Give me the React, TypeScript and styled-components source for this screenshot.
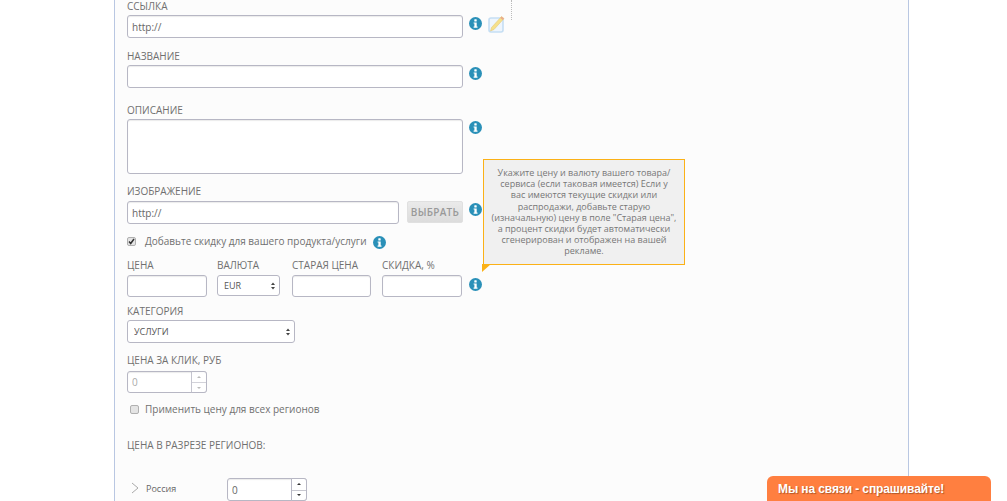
import React from 'react';
import styled, { createGlobalStyle } from 'styled-components';

const GlobalStyle = createGlobalStyle`
  html, body {
    margin: 0;
    padding: 0;
    height: 501px;
    overflow: hidden;
    background: #fff;
    font-family: 'Open Sans', 'Liberation Sans', sans-serif;
  }
`;

const Panel = styled.main`
  position: relative;
  box-sizing: border-box;
  width: 795px;
  height: 501px;
  margin-left: 114px;
  padding-left: 12px;
  background: #fcfcfc;
  border-left: 1px solid #b9c7e2;
  border-right: 1px solid #b9c7e2;
  overflow: hidden;
`;

const Dotted = styled.div`
  position: absolute;
  left: 396px;
  top: 0;
  height: 20px;
  border-left: 1px dotted #bbb;
`;

const Label = styled.label<{ $top?: number; $gap?: number }>`
  display: block;
  height: 12px;
  margin-top: ${(p) => p.$top ?? 0}px;
  margin-bottom: ${(p) => p.$gap ?? 4}px;
  font-size: 10px;
  line-height: 12px;
  color: #707070;
  white-space: nowrap;
`;

const Row = styled.div`
  display: flex;
  align-items: flex-start;
`;

const Field = styled.input<{ $w: number; $h?: number; $muted?: boolean }>`
  box-sizing: border-box;
  display: block;
  width: ${(p) => p.$w}px;
  height: ${(p) => p.$h ?? 23}px;
  padding: 0 4px;
  background: #fff;
  border: 1px solid #b7b7c4;
  border-radius: 3px;
  box-shadow: inset 0 1px 1px rgba(0, 0, 0, 0.08);
  font-family: inherit;
  font-size: 10px;
  color: ${(p) => (p.$muted ? '#aaa' : '#666')};
  outline: none;
`;

const Area = styled.textarea`
  box-sizing: border-box;
  display: block;
  width: 336px;
  height: 55px;
  background: #fff;
  border: 1px solid #b7b7c4;
  border-radius: 3px;
  box-shadow: inset 0 1px 1px rgba(0, 0, 0, 0.08);
  resize: none;
  outline: none;
`;

const Info = styled.svg<{ $left?: number; $top?: number }>`
  flex: none;
  width: 13px;
  height: 13px;
  margin-left: ${(p) => p.$left ?? 6}px;
  margin-top: ${(p) => p.$top ?? 2}px;
`;

const InfoIcon = ({ left, top }: { left?: number; top?: number }) => (
  <Info viewBox="0 0 13 13" $left={left} $top={top}>
    <circle cx="6.5" cy="6.5" r="6.5" fill="#2a90b8" />
    <rect x="5.3" y="2.3" width="2.4" height="2.2" rx="0.5" fill="#fff" />
    <path d="M4.6 5.4h3.1v4.1h.8v1.2H4.6V9.5h.8V6.6h-.8z" fill="#fff" />
  </Info>
);

const Pencil = styled.svg`
  flex: none;
  width: 17px;
  height: 18px;
  margin-left: 6px;
`;

const PickButton = styled.button`
  box-sizing: border-box;
  flex: none;
  width: 56px;
  height: 22px;
  margin-left: 8px;
  padding: 0;
  background: linear-gradient(#eaeaea, #dcdcdc);
  border: 1px solid #e0e0e0;
  border-radius: 2px;
  font-family: inherit;
  font-size: 10px;
  font-weight: 600;
  letter-spacing: 0.3px;
  color: #999;
`;

const CheckRow = styled.div<{ $top: number; $indent?: number }>`
  display: flex;
  align-items: center;
  height: 13px;
  margin-top: ${(p) => p.$top}px;
  padding-left: ${(p) => p.$indent ?? 0}px;
`;

const Box = styled.span`
  box-sizing: border-box;
  flex: none;
  display: flex;
  align-items: center;
  justify-content: center;
  width: 9px;
  height: 9px;
  background: #e4e4e4;
  border: 1px solid #b0b0b0;
  border-radius: 2px;
`;

const CheckText = styled.span<{ $left: number }>`
  margin-left: ${(p) => p.$left}px;
  font-size: 10px;
  line-height: 13px;
  color: #707070;
  white-space: nowrap;
`;

const PriceGrid = styled.div`
  display: grid;
  grid-template-columns: 90px 75px 90px 87px 13px;
  margin-top: 11px;
  align-items: start;
`;

const PriceCell = styled.div`
  min-width: 0;
`;

const SelectWrap = styled.div<{ $w: number }>`
  position: relative;
  width: ${(p) => p.$w}px;
`;

const Select = styled.select<{ $h: number }>`
  box-sizing: border-box;
  display: block;
  width: 100%;
  height: ${(p) => p.$h}px;
  padding: 0 0 0 6px;
  appearance: none;
  background: #fff;
  border: 1px solid #b7b7c4;
  border-radius: 3px;
  font-family: inherit;
  font-size: 9px;
  color: #555;
  outline: none;
`;

const Arrows = styled.svg`
  position: absolute;
  right: 5px;
  top: 50%;
  width: 4px;
  height: 8px;
  margin-top: -4px;
  pointer-events: none;
`;

const SelectArrows = () => (
  <Arrows viewBox="0 0 4 8">
    <path d="M2 0.5L4 3H0zM2 7.5L0 5h4z" fill="#444" />
  </Arrows>
);

const Stepper = styled.div`
  position: relative;
  width: 80px;
`;

const Spin = styled.div<{ $muted?: boolean }>`
  position: absolute;
  top: 0;
  right: 0;
  bottom: 0;
  width: 16px;
  display: grid;
  grid-template-rows: 1fr 1fr;
  box-sizing: border-box;
  border: 1px solid #b7b7c4;
  border-radius: 0 3px 3px 0;
  background: #fff;
  color: ${(p) => (p.$muted ? '#aaa' : '#333')};
  opacity: ${(p) => (p.$muted ? 0.8 : 1)};
`;

const SpinPart = styled.span<{ $down?: boolean }>`
  display: flex;
  align-items: center;
  justify-content: center;
  border-top: ${(p) => (p.$down ? '1px solid #c8c8d0' : 'none')};
  &::before {
    content: '';
    border-left: 2px solid transparent;
    border-right: 2px solid transparent;
    border-${(p) => (p.$down ? 'top' : 'bottom')}: 2px solid currentColor;
  }
`;

const RegionRow = styled.div`
  display: flex;
  align-items: center;
  height: 23px;
  margin-top: 27px;
  padding-left: 4px;
`;

const Chevron = styled.svg`
  flex: none;
  width: 8px;
  height: 12px;
  margin-bottom: 3px;
`;

const RegionName = styled.span`
  width: 81px;
  margin-left: 7px;
  margin-bottom: 3px;
  font-size: 9px;
  color: #666;
`;

const Tooltip = styled.div`
  position: absolute;
  left: 368px;
  top: 159px;
  box-sizing: border-box;
  width: 202px;
  height: 106px;
  padding-top: 7px;
  background: #f0f0f0;
  border: 1px solid #fbb117;
  font-size: 9px;
  line-height: 11.2px;
  text-align: center;
  white-space: nowrap;
  color: #777;
  &::after {
    content: '';
    position: absolute;
    left: -2px;
    top: 104px;
    border-top: 8px solid #fbb117;
    border-right: 9px solid transparent;
  }
`;

const ChatTab = styled.div`
  position: fixed;
  left: 767px;
  bottom: 0;
  box-sizing: border-box;
  width: 224px;
  height: 25px;
  padding: 6px 0 0 11px;
  background: #ff7f40;
  border-radius: 6px 6px 0 0;
  font-family: 'Liberation Sans', sans-serif;
  font-size: 12px;
  font-weight: 700;
  line-height: 14px;
  letter-spacing: -0.1px;
  color: #fff;
  text-shadow: 1px 1px 1px rgba(80, 40, 10, 0.45);
`;

export default function App() {
  return (
    <>
      <GlobalStyle />
      <Panel>
        <Dotted />
        <Label $gap={3}>ССЫЛКА</Label>
        <Row>
          <Field $w={336} defaultValue="http://" />
          <InfoIcon />
          <Pencil viewBox="0 0 17 18">
            <rect x="1" y="3" width="14" height="14" rx="2" fill="#eef5fc" stroke="#c5def3" strokeWidth="1.6" />
            <path d="M13.5 1.5l2.5 2L6 14.5l-3.5 1.5 1-3.5z" fill="#f6e08a" stroke="#dcc272" strokeWidth="0.5" />
            <path d="M13.5 1.5l2.5 2-1.2 1.4-2.5-2z" fill="#ecab8c" />
          </Pencil>
        </Row>
        <Label $top={12} $gap={3}>НАЗВАНИЕ</Label>
        <Row>
          <Field $w={336} />
          <InfoIcon />
        </Row>
        <Label $top={16} $gap={3}>ОПИСАНИЕ</Label>
        <Row>
          <Area />
          <InfoIcon />
        </Row>
        <Label $top={11} $gap={4}>ИЗОБРАЖЕНИЕ</Label>
        <Row>
          <Field $w={272} defaultValue="http://" />
          <PickButton>ВЫБРАТЬ</PickButton>
          <InfoIcon />
        </Row>
        <CheckRow $top={11}>
          <Box>
            <svg width="7" height="7" viewBox="0 0 7 7">
              <path d="M1 3.5l1.7 2L6 1" fill="none" stroke="#333" strokeWidth="1.5" />
            </svg>
          </Box>
          <CheckText $left={9}>Добавьте скидку для вашего продукта/услуги</CheckText>
          <InfoIcon left={7} top={1} />
        </CheckRow>
        <PriceGrid>
          <PriceCell>
            <Label>ЦЕНА</Label>
            <Field $w={80} $h={22} />
          </PriceCell>
          <PriceCell>
            <Label>ВАЛЮТА</Label>
            <SelectWrap $w={63}>
              <Select $h={21} defaultValue="EUR">
                <option>EUR</option>
              </Select>
              <SelectArrows />
            </SelectWrap>
          </PriceCell>
          <PriceCell>
            <Label>СТАРАЯ ЦЕНА</Label>
            <Field $w={79} $h={22} />
          </PriceCell>
          <PriceCell>
            <Label>СКИДКА, %</Label>
            <Field $w={80} $h={22} />
          </PriceCell>
          <InfoIcon left={0} top={19} />
        </PriceGrid>
        <Label $top={8} $gap={3}>КАТЕГОРИЯ</Label>
        <SelectWrap $w={168}>
          <Select $h={23} defaultValue="УСЛУГИ">
            <option>УСЛУГИ</option>
          </Select>
          <SelectArrows />
        </SelectWrap>
        <Label $top={11} $gap={5}>ЦЕНА ЗА КЛИК, РУБ</Label>
        <Stepper>
          <Field $w={80} $h={22} $muted defaultValue="0" disabled />
          <Spin $muted>
            <SpinPart />
            <SpinPart $down />
          </Spin>
        </Stepper>
        <CheckRow $top={10} $indent={3}>
          <Box />
          <CheckText $left={6}>Применить цену для всех регионов</CheckText>
        </CheckRow>
        <Label $top={23} $gap={0}>ЦЕНА В РАЗРЕЗЕ РЕГИОНОВ:</Label>
        <RegionRow>
          <Chevron viewBox="0 0 8 12">
            <path d="M1 1l6 5-6 5" fill="none" stroke="#aaa" />
          </Chevron>
          <RegionName>Россия</RegionName>
          <Stepper>
            <Field $w={80} defaultValue="0" />
            <Spin>
              <SpinPart />
              <SpinPart $down />
            </Spin>
          </Stepper>
        </RegionRow>
        <Tooltip>
          Укажите цену и валюту вашего товара/
          <br />
          сервиса (если таковая имеется) Если у
          <br />
          вас имеются текущие скидки или
          <br />
          распродажи, добавьте старую
          <br />
          (изначальную) цену в поле "Старая цена",
          <br />
          а процент скидки будет автоматически
          <br />
          сгенерирован и отображен на вашей
          <br />
          рекламе.
        </Tooltip>
      </Panel>
      <ChatTab>Мы на связи - спрашивайте!</ChatTab>
    </>
  );
}
